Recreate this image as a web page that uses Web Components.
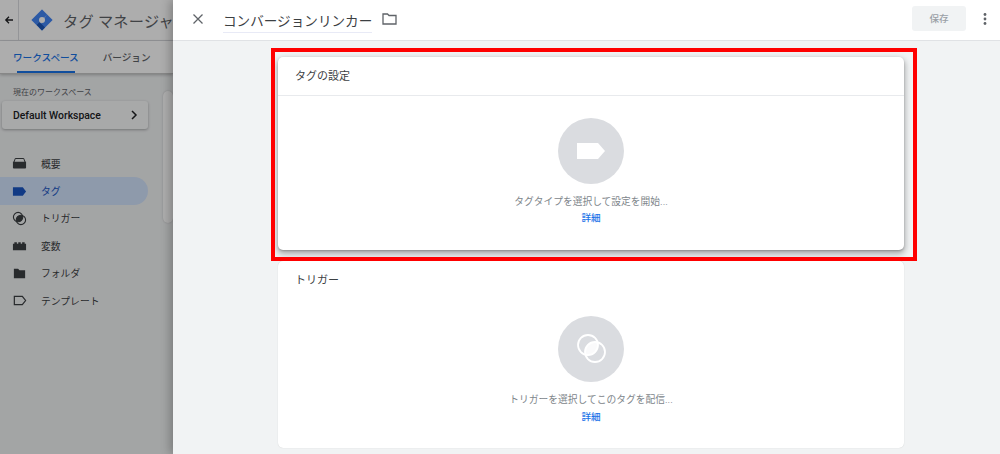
<!DOCTYPE html>
<html lang="ja">
<head>
<meta charset="utf-8">
<title>タグ マネージャー</title>
<style>
html,body{margin:0;height:100%;overflow:hidden}
body{display:flex;width:1000px;height:454px;font-family:Roboto,"Noto Sans CJK JP",sans-serif;background:#fff}
</style>
</head>
<body>
<gtm-sidebar>
    <gtm-nav-item icon="overview">概要</gtm-nav-item>
    <gtm-nav-item icon="tag" active>タグ</gtm-nav-item>
    <gtm-nav-item icon="trigger">トリガー</gtm-nav-item>
    <gtm-nav-item icon="variable">変数</gtm-nav-item>
    <gtm-nav-item icon="folder">フォルダ</gtm-nav-item>
    <gtm-nav-item icon="template">テンプレート</gtm-nav-item>
</gtm-sidebar>
<gtm-panel>
    <gtm-card heading="タグの設定" icon="tag" message="タグタイプを選択して設定を開始..." focused></gtm-card>
    <gtm-card heading="トリガー" icon="trigger" message="トリガーを選択してこのタグを配信..."></gtm-card>
</gtm-panel>

<script>
const FONT='Roboto,"Noto Sans CJK JP",sans-serif'
const NAV_ICONS={
    overview:'<path d="M1.500 6.500 3 2.600C3.200 2.200 3.600 2 4 2h8c.4 0 .8.2 1 .6l1.500 3.900H13.300L12.200 3.200H3.800L2.700 6.500Z" fill="currentColor"/><path d="M1 6h14v6.500c0 .5-.4.9-.9.900H1.900c-.5 0-.9-.4-.9-.9Z" fill="currentColor"/>',
    tag:'<path d="M1 3.500h10.500L15 8l-3.500 4.500H1Z" fill="currentColor"/>',
    trigger:'<defs><clipPath id="nt"><circle cx="6.500" cy="6.500" r="5"/></clipPath></defs><circle cx="9.500" cy="9.500" r="5" fill="currentColor" clip-path="url(#nt)"/><circle cx="6.500" cy="6.500" r="5" fill="none" stroke="currentColor" stroke-width="1.200"/><circle cx="9.500" cy="9.500" r="5" fill="none" stroke="currentColor" stroke-width="1.200"/>',
    variable:'<path d="M1 13V6h1.500V4.500h2.700V6h1.500V4.500h2.600V6h1.500V4.500h2.700V6H15v7Z" fill="currentColor"/>',
    folder:'<path d="M2 3h4.500L8 4.500h6V13H2Z" fill="currentColor"/>',
    template:'<path d="M2.500 3.500h8.500L14.500 8 11 12.500H2.500Z" fill="none" stroke="currentColor" stroke-width="1.300"/>'
}

class GtmSidebar extends HTMLElement{
    constructor(){
        super()
    }
    connectedCallback(){
        this.attachShadow({mode:'open'})
        this.shadowRoot.innerHTML=`
        <style>
        :host{display:block;position:relative;width:173px;height:454px;flex:none;overflow:hidden;background:#fff;font-family:${FONT};color:#3c4043}
        .top{height:40px;display:flex;align-items:center;border-bottom:1px solid #dadce0;background:#fff}
        .back{width:18px;height:40px;flex:none;display:flex;align-items:center;justify-content:center;border-right:1px solid #dadce0;color:#202124}
        .logo{margin-left:12px;flex:none;display:block}
        .product{margin-left:10px;font-size:15.200px;white-space:nowrap;color:#5f6368;letter-spacing:.25px}
        .tabs{height:32px;display:flex;gap:24px;padding-left:13px;border-bottom:1px solid #c8c8c8;background:#fff;box-shadow:0 1px 3px rgba(0,0,0,.25);position:relative;font-size:9.600px;font-weight:500}
        .tab{padding-top:9px;color:#5f6368;white-space:nowrap;position:relative}
        .tab.on{color:#1a73e8}
        .tab.on::after{content:"";position:absolute;left:4px;right:4px;top:30px;height:2px;background:#1a73e8}
        .body{display:flex;height:381px;background:#f1f3f4}
        .col{width:163px;flex:none}
        .label{font-size:8px;color:#5f6368;padding:12px 0 0 13px;height:15px}
        .workspace{margin:0 15px 0 2px;height:28px;box-sizing:border-box;padding:0 10px 0 11px;background:#f8f9fa;border-radius:3px;box-shadow:0 1px 3px rgba(0,0,0,.3);display:flex;align-items:center;justify-content:space-between;font-size:10.400px;font-weight:500;color:#202124}
        .nav{padding-top:21px;width:148px}
        .stub{width:20px;height:132px;margin-top:17px;background:#fff;border-radius:5px;box-shadow:0 0 2px rgba(0,0,0,.2)}
        .scrim{position:absolute;inset:0;background:rgba(0,0,0,.32)}
        </style>
        <div class="top">
            <div class="back"><svg width="10" height="10" viewBox="0 0 10 10"><path d="M9 5H2M5 1.800 1.800 5 5 8.200" fill="none" stroke="currentColor" stroke-width="1.300"/></svg></div>
            <svg class="logo" width="22" height="22" viewBox="0 0 22 22"><path d="M11 .5 21.500 11 11 21.500.5 11Z" fill="#8ab4f8"/><path d="M11 .5 16 5.500 5.500 16 .5 11Z" fill="#4285f4"/><path d="M16 5.500 21.500 11 11 21.500 8 18.500Z" fill="#4285f4"/><path d="M11 21.500 5.500 16l3-3 5.500 5.500Z" fill="#1a56b8"/><circle cx="11" cy="11" r="3" fill="#fff"/></svg>
            <span class="product">タグ マネージャ</span>
        </div>
        <div class="tabs"><span class="tab on">ワークスペース</span><span class="tab">バージョン</span></div>
        <div class="body">
            <div class="col">
                <div class="label">現在のワークスペース</div>
                <div class="workspace"><span>Default Workspace</span><svg width="8" height="10" viewBox="0 0 8 10"><path d="M2 1l4 4-4 4" fill="none" stroke="#202124" stroke-width="1.500"/></svg></div>
                <div class="nav"><slot></slot></div>
            </div>
            <div class="stub"></div>
        </div>
        <div class="scrim"></div>`
    }
}

class GtmNavItem extends HTMLElement{
    constructor(){
        super()
    }
    connectedCallback(){
        this.attachShadow({mode:'open'})
        this.shadowRoot.innerHTML=`
        <style>
        :host{display:flex;align-items:center;gap:14px;height:27.400px;padding-left:12px;border-radius:0 14px 14px 0;font-size:9.800px;color:#3c4043;font-family:${FONT}}
        :host([active]){background:#d2e3fc;color:#1a56c4}
        svg{display:block;flex:none}
        </style>
        <svg width="15" height="15" viewBox="0 0 16 16">${NAV_ICONS[this.getAttribute('icon')]}</svg>
        <slot></slot>`
    }
}

class GtmCard extends HTMLElement{
    constructor(){
        super()
    }
    connectedCallback(){
        this.attachShadow({mode:'open'})
        const isTag=this.getAttribute('icon')=='tag'
        const glyph=isTag
            ?'<path d="M19 25h21l7 8-7 8H19Z" fill="#fff"/>'
            :'<defs><clipPath id="lens"><circle cx="30" cy="29" r="10"/></clipPath></defs><circle cx="37" cy="36" r="10" fill="#fff" fill-opacity=".85" clip-path="url(#lens)"/><circle cx="30" cy="29" r="10" fill="none" stroke="#fff" stroke-width="1.800"/><circle cx="37" cy="36" r="10" fill="none" stroke="#fff" stroke-width="1.800"/>'
        this.shadowRoot.innerHTML=`
        <style>
        :host{display:block;width:626px;background:#fff;border-radius:5px;font-family:${FONT};box-shadow:0 0 1px rgba(0,0,0,.2)}
        :host([focused]){box-shadow:0 1px 2px rgba(0,0,0,.2),0 3px 6px 1px rgba(0,0,0,.3)}
        .head{height:39px;box-sizing:border-box;padding:10px 0 0 17px;font-size:11px;color:#3c4043}
        :host([focused]) .head{border-bottom:1px solid #e8eaed}
        .body{display:flex;flex-direction:column;align-items:center;height:154px;padding-top:22px;box-sizing:border-box}
        :host(:not([focused])) .body{height:148px;padding-top:16px}
        .disc{width:66px;height:66px;border-radius:50%;background:#dadce0;display:block}
        .msg{margin-top:11px;font-size:9.750px;color:#80868b;line-height:14px}
        .more{margin-top:3px;font-size:9.600px;font-weight:500;color:#1a73e8;line-height:14px}
        :host([focused]) .more{margin-top:2px}
        </style>
        <div class="head">${this.getAttribute('heading')}</div>
        <div class="body">
            <svg class="disc" viewBox="0 0 66 66">${glyph}</svg>
            <div class="msg">${this.getAttribute('message')}</div>
            <div class="more">詳細</div>
        </div>`
    }
}

class GtmPanel extends HTMLElement{
    constructor(){
        super()
    }
    connectedCallback(){
        this.attachShadow({mode:'open'})
        this.shadowRoot.innerHTML=`
        <style>
        :host{display:flex;flex-direction:column;flex:1;height:454px;position:relative;background:#f1f3f4;font-family:${FONT};box-shadow:-3px 0 9px rgba(0,0,0,.25)}
        .bar{height:41px;box-sizing:border-box;flex:none;background:#fff;border-bottom:1px solid #e0e2e5;display:flex;align-items:center;padding:0 13px 3px 19px}
        .close{display:block;flex:none}
        .title{margin-left:19px;font-size:13.600px;color:#3c4043;border-bottom:1px solid #e8eaf6;height:25px;line-height:26px;margin-top:4px;box-sizing:border-box;white-space:nowrap}
        .folder{display:block;margin-left:10px;flex:none}
        .save{margin-left:auto;margin-top:-1px;width:54px;height:25px;background:#f1f3f4;border-radius:3px;color:#9aa0a6;font-size:9.600px;font-weight:500;display:flex;align-items:center;justify-content:center}
        .more{margin-left:17px;display:block;flex:none}
        .scroll{display:flex;flex-direction:column;align-items:flex-start;gap:11px;padding:16px 0 0 105px;position:relative}
        .mark{position:absolute;left:98px;top:7px;width:646px;height:213px;box-sizing:border-box;border:4px solid #f00;pointer-events:none}
        </style>
        <div class="bar">
            <svg class="close" width="12" height="12" viewBox="0 0 12 12"><path d="M1.500 1.500l9 9M10.500 1.500l-9 9" stroke="#5f6368" stroke-width="1.300"/></svg>
            <span class="title">コンバージョンリンカー</span>
            <svg class="folder" width="15" height="13" viewBox="0 0 15 13"><path d="M1 2h4.500L7 3.500h7V12H1Z" fill="none" stroke="#5f6368" stroke-width="1.300"/></svg>
            <span class="save">保存</span>
            <svg class="more" width="4" height="12" viewBox="0 0 4 12"><circle cx="2" cy="1.500" r="1.400" fill="#5f6368"/><circle cx="2" cy="6" r="1.400" fill="#5f6368"/><circle cx="2" cy="10.500" r="1.400" fill="#5f6368"/></svg>
        </div>
        <div class="scroll">
            <slot></slot>
            <div class="mark"></div>
        </div>`
    }
}

customElements.define('gtm-sidebar',GtmSidebar)
customElements.define('gtm-nav-item',GtmNavItem)
customElements.define('gtm-card',GtmCard)
customElements.define('gtm-panel',GtmPanel)
</script>
</body>
</html>
